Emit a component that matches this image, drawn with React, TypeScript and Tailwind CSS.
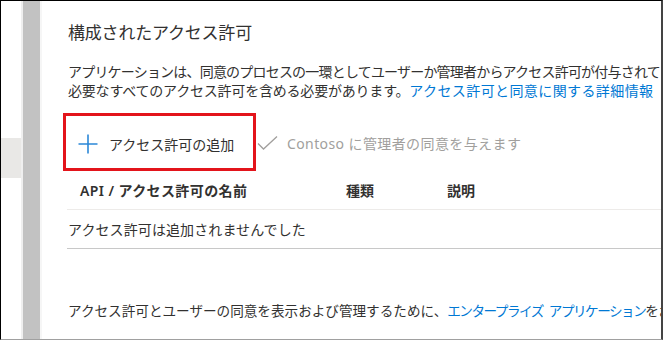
import React from 'react';

const font = { fontFamily: '"Noto Sans", "Noto Sans CJK JP", sans-serif' };

const PlusIcon = () => (
  <svg width="20" height="20" viewBox="0 0 20 20" className="shrink-0">
    <path d="M10 0.5V19.5M0.5 10H19.5" stroke="#2b88d8" strokeWidth="1.6" fill="none" />
  </svg>
);

const CheckIcon = () => (
  <svg width="21" height="15" viewBox="0 0 21 15" className="shrink-0">
    <path d="M1 7.5L6.5 13L20 0.5" stroke="#a19f9d" strokeWidth="1.3" fill="none" />
  </svg>
);

const App: React.FC = () => {
  return (
    <div
      className="w-[663px] h-[340px] overflow-hidden bg-white border-t border-l border-black border-r-2 border-r-[#444444] border-b border-b-[#a0a0a0] flex text-[#323130]"
      style={font}
    >
      {/* left nav edge */}
      <div className="w-[20px] shrink-0 pt-[137px]">
        <div className="h-[40px] bg-[#e9e8e6]"></div>
      </div>
      <div className="w-[2px] shrink-0 bg-[#efefef]"></div>
      <div className="w-[17px] shrink-0 bg-[#c2c2c2]"></div>
      <div className="w-[2px] shrink-0 bg-[#f6f6f6]"></div>

      <div className="flex-1 min-w-0 pl-[26px] pt-[20px] whitespace-nowrap overflow-hidden">
        <div className="text-[17px] leading-[24px] tracking-[-0.2px]">構成されたアクセス許可</div>

        <div className="mt-[17px] text-[14px] leading-[19px]">
          <div className="tracking-[-0.8px]">アプリケーションは、同意のプロセスの一環としてユーザーか管理者からアクセス許可が付与されて</div>
          <div className="tracking-[-0.2px]">
            必要なすべてのアクセス許可を含める必要があります。
            <span className="text-[#0078d4] tracking-[0.4px]">アクセス許可と同意に関する詳細情報</span>
          </div>
        </div>

        {/* actions */}
        <div className="mt-[13px] ml-[-5px] flex items-center">
          <div className="w-[193px] h-[58px] border-[3px] border-[#e3141b] flex items-center gap-[11px] pl-[12px] pt-[4px]">
            <PlusIcon />
            <span className="text-[14px]">アクセス許可の追加</span>
          </div>
          <div className="flex items-center gap-[9px] ml-[1px] pt-[2px] text-[14px] tracking-[0.4px] text-[#a19f9d]">
            <CheckIcon />
            <span>Contoso に管理者の同意を与えます</span>
          </div>
        </div>

        {/* table */}
        <div className="ml-[-1px]">
          <div className="h-[39px] flex items-center pl-[13px] border-b border-[#edebe9] text-[14px] font-semibold">
            <div className="w-[266px] tracking-[0.4px]">API / アクセス許可の名前</div>
            <div className="w-[101px]">種類</div>
            <div>説明</div>
          </div>
          <div className="h-[39px] flex items-center pl-[1px] border-b border-[#c8c8c8] text-[14px] tracking-[0.1px]">
            アクセス許可は追加されませんでした
          </div>
        </div>

        <div className="mt-[52px] text-[13.6px] leading-[19px]">
          アクセス許可とユーザーの同意を表示および管理するために、
          <span className="text-[#0078d4] tracking-[-1.5px]">
            エンタープライズ<span className="inline-block w-[6px]"></span>アプリケーション
          </span>
          をお使いください。
        </div>
      </div>
    </div>
  );
};

export default App;
